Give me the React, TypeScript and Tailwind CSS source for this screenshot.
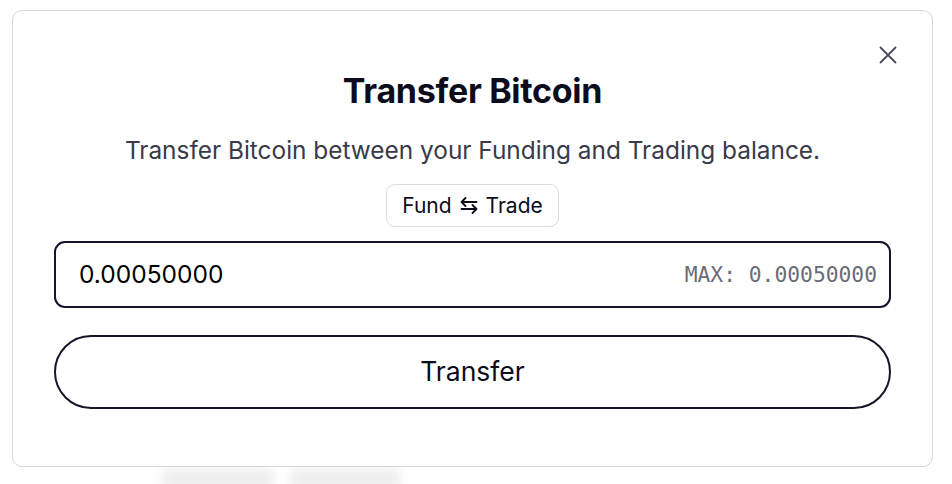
import { useState } from "react"

function CloseIcon() {
  return (
    <svg width="18" height="18" viewBox="0 0 18 18" fill="none" stroke="currentColor" strokeWidth="1.8" strokeLinecap="round">
      <path d="M1.5 1.5l15 15M16.5 1.5l-15 15" />
    </svg>
  )
}

function SwapIcon() {
  return (
    <svg width="18" height="17" viewBox="0 0 18 17" fill="none" stroke="currentColor" strokeWidth="1.8" strokeLinecap="round" strokeLinejoin="round">
      <path d="M16.5 5H1.5M5.5 1L1.5 5l4 4" />
      <path d="M1.5 12h15M12.5 8l4 4-4 4" />
    </svg>
  )
}

export default function App() {
  const [amount, setAmount] = useState("0.00050000")

  return (
    <div className="min-h-screen bg-white relative overflow-hidden" style={{ fontFamily: "Inter, 'Noto Sans', sans-serif" }}>
      {/* blurred page content behind the dialog */}
      <div className="absolute top-[469px] left-[162px] flex gap-[16px]">
        <div className="w-[112px] h-[20px] bg-[#eeeeee] blur-[5px] rounded" />
        <div className="w-[110px] h-[20px] bg-[#eeeeee] blur-[5px] rounded" />
      </div>

      <div className="relative ml-[12px] mt-[10px] w-[921px] h-[457px] bg-white border border-[#d6d6d6] rounded-[10px] px-[41px] pt-[60px] flex flex-col items-center">
        <button className="absolute top-[35px] right-[35px] text-[#4b4b5a]">
          <CloseIcon />
        </button>

        <h2 className="text-[34px] leading-[40px] font-bold text-[#0c0c1d] tracking-[-0.3px]">Transfer Bitcoin</h2>

        <p className="mt-[25px] text-[24.4px] leading-[28px] text-[#3a3a48]">
          Transfer Bitcoin between your Funding and Trading balance.
        </p>

        <button className="mt-[20px] h-[43px] px-[15px] flex items-center gap-[8px] border border-[#dcdcdc] rounded-[9px] text-[21px] text-[#0c0c1d]">
          <span>Fund</span>
          <SwapIcon />
          <span>Trade</span>
        </button>

        <div className="mt-[14px] w-full h-[67px] border-2 border-[#14142a] rounded-[11px] flex items-center pl-[23px] pr-[12px]">
          <input
            value={amount}
            onChange={(e) => setAmount(e.target.value)}
            className="flex-1 min-w-0 bg-transparent outline-none text-[24.5px] text-black"
          />
          <span className="text-[21.3px] text-[#6b6b76]" style={{ fontFamily: "'DejaVu Sans Mono', monospace" }}>
            MAX: 0.00050000
          </span>
        </div>

        <button className="mt-[27px] w-full h-[74px] border-2 border-[#14142a] rounded-full text-[26.5px] text-[#0c0c1d]">
          Transfer
        </button>
      </div>
    </div>
  )
}
